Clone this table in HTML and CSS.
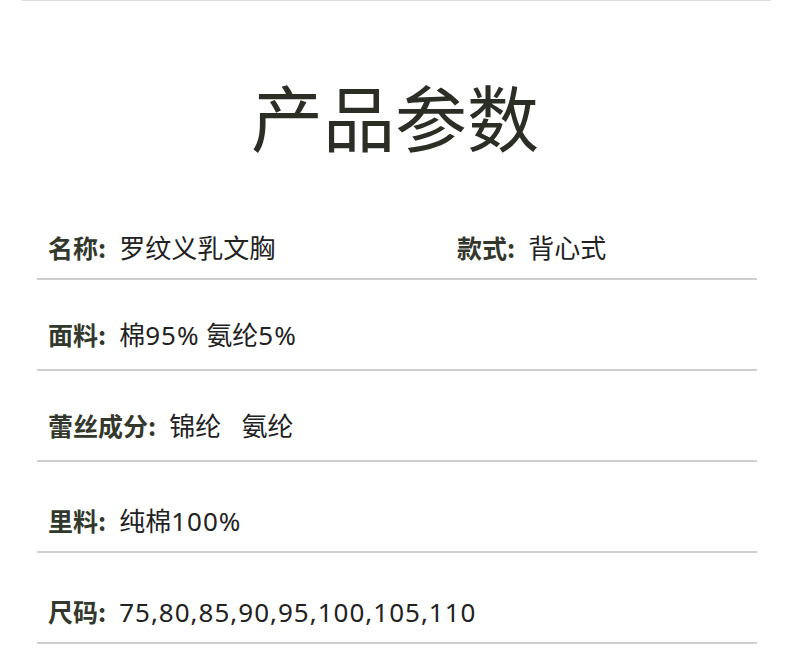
FILE: index.html
```html
<!DOCTYPE html>
<html lang="zh">
<head>
<meta charset="utf-8">
<link rel="stylesheet" href="styles.css">
</head>
<body>
<div class="top-rule"></div>
<h1 class="title">产品参数</h1>
<div class="table">
  <div class="row">
    <div class="cell"><span class="label">名称:</span><span class="value">罗纹义乳文胸</span></div>
    <div class="cell"><span class="label">款式:</span><span class="value">背心式</span></div>
  </div>
  <div class="row row-low">
    <div class="cell"><span class="label">面料:</span><span class="value">棉<span class="num">95%</span> 氨纶<span class="num">5%</span></span></div>
  </div>
  <div class="row row-low">
    <div class="cell"><span class="label">蕾丝成分:</span><span class="value">锦纶&nbsp;&nbsp;&nbsp;氨纶</span></div>
  </div>
  <div class="row">
    <div class="cell"><span class="label">里料:</span><span class="value">纯棉<span class="num">100%</span></span></div>
  </div>
  <div class="row">
    <div class="cell"><span class="label">尺码:</span><span class="value"><span class="num">75,80,85,90,95,100,105,110</span></span></div>
  </div>
</div>
</body>
</html>
```

FILE: styles.css
```css
html, body {
  margin: 0;
  padding: 0;
  background: #fff;
}
body {
  font-family: "Noto Sans CJK SC", "Noto Sans", sans-serif;
  width: 790px;
  height: 666px;
  overflow: hidden;
}
.top-rule {
  height: 1px;
  background: #dcdcdc;
  margin: 0 19px 0 22px;
}
.title {
  margin: 74px 0 0 0;
  text-align: center;
  font-size: 72px;
  line-height: 80px;
  font-weight: 400;
  color: #2b2e24;
}
.table {
  margin: 34px 33px 0 37px;
}
.row {
  display: grid;
  grid-template-columns: 409px 1fr;
  align-items: end;
  height: 89px;
  border-bottom: 2px solid #cfcfcf;
  padding: 0 0 0 11px;
}
.cell {
  font-size: 26px;
  line-height: 30px;
  padding-bottom: 15px;
  white-space: nowrap;
}
.row-low .cell {
  padding-bottom: 19px;
}
.label {
  font-size: 25px;
  color: #33382c;
  font-weight: 700;
  margin-right: 13px;
}
.value {
  font-family: "Noto Sans", "Noto Sans CJK SC", sans-serif;
  color: #222;
  font-weight: 400;
}
.num {
  letter-spacing: 1px;
}
```
